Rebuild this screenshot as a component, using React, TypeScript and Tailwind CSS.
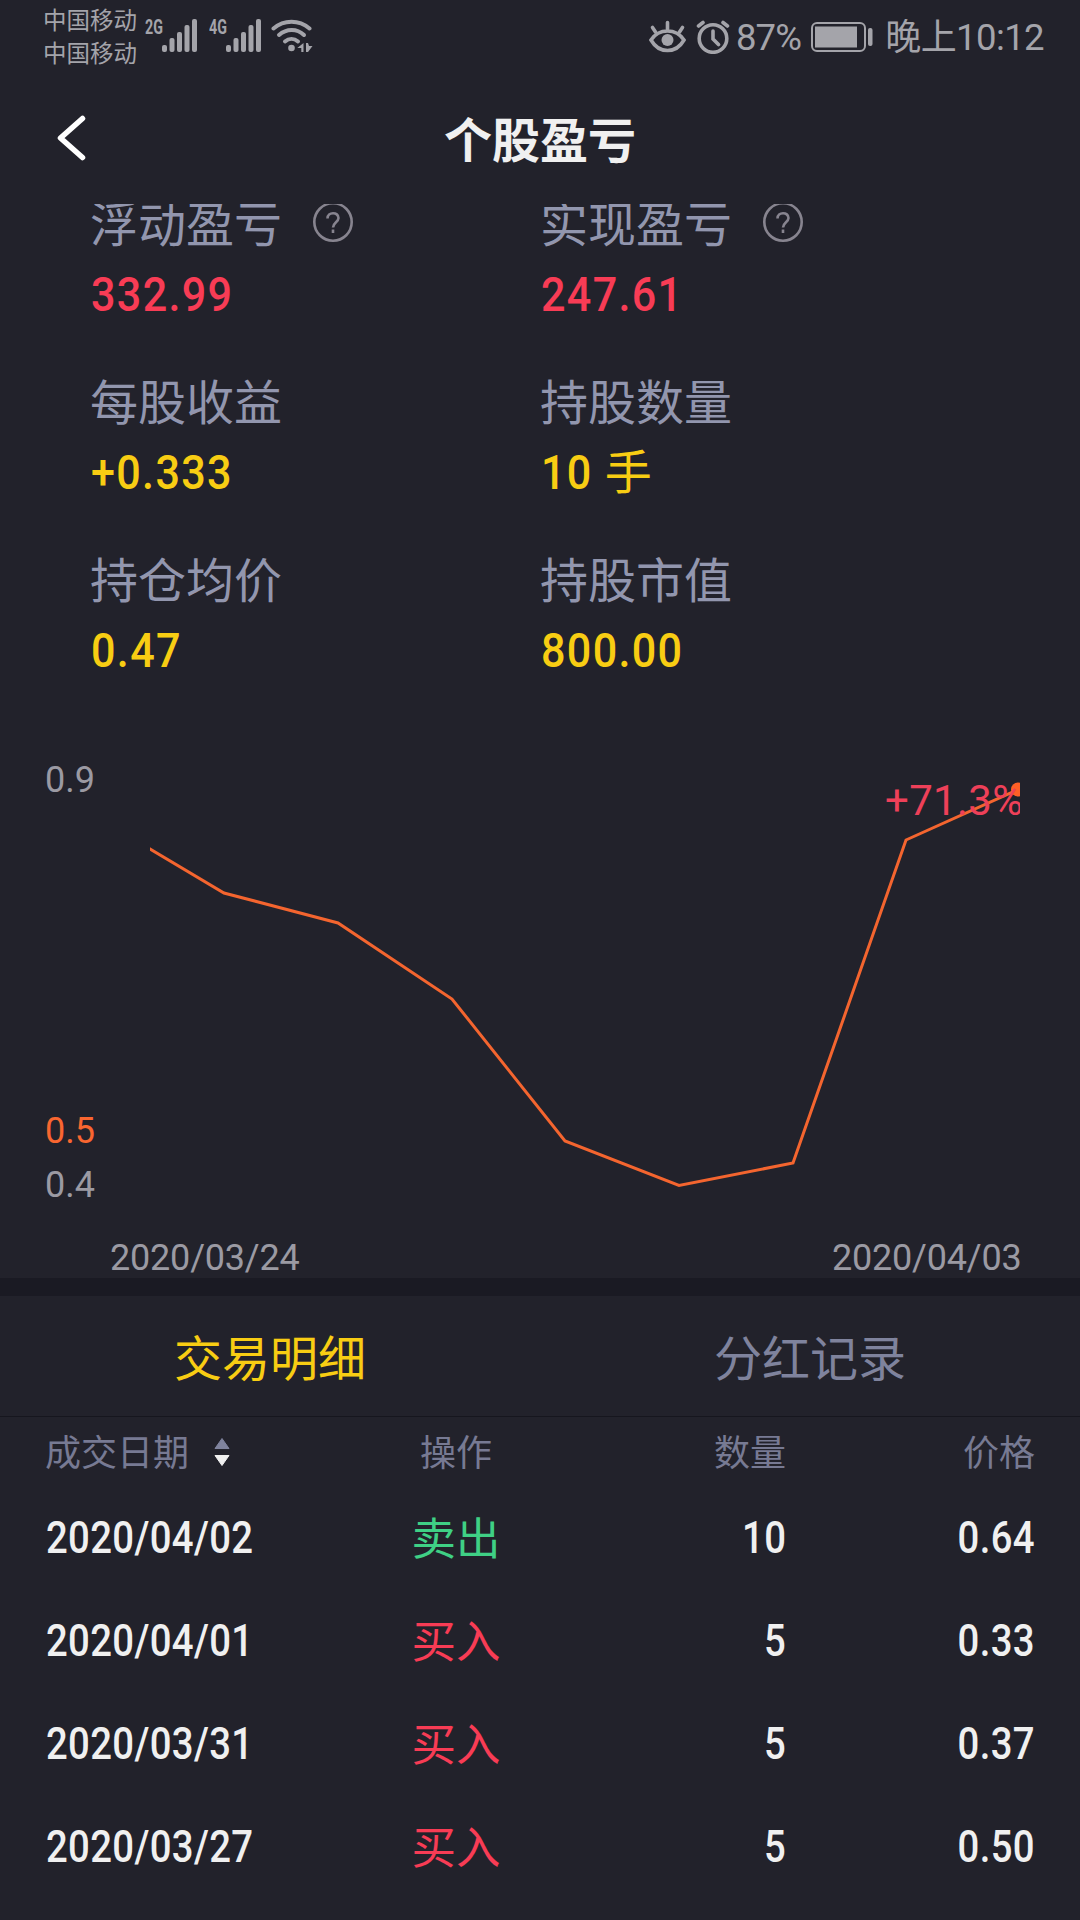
import { ReactNode } from "react";
import clsx from "clsx";

interface Stat {
  label: string;
  value: string;
  unit?: string;
  color: string;
  help?: boolean;
}

interface Trade {
  date: string;
  side: "buy" | "sell";
  amount: number;
  price: string;
}

const STATS: Stat[] = [
  { label: "浮动盈亏", value: "332.99", color: "text-[#f83c55]", help: true },
  { label: "实现盈亏", value: "247.61", color: "text-[#f83c55]", help: true },
  { label: "每股收益", value: "+0.333", color: "text-[#f8cd13]" },
  { label: "持股数量", value: "10", unit: "手", color: "text-[#f8cd13]" },
  { label: "持仓均价", value: "0.47", color: "text-[#f8cd13]" },
  { label: "持股市值", value: "800.00", color: "text-[#f8cd13]" },
];

const TRADES: Trade[] = [
  { date: "2020/04/02", side: "sell", amount: 10, price: "0.64" },
  { date: "2020/04/01", side: "buy", amount: 5, price: "0.33" },
  { date: "2020/03/31", side: "buy", amount: 5, price: "0.37" },
  { date: "2020/03/27", side: "buy", amount: 5, price: "0.50" },
];

// Narrow numerals, squeezed towards the side they are aligned to
function Num({ children, right }: { children: ReactNode; right?: boolean }) {
  return (
    <span
      className={clsx(
        "inline-block scale-x-[0.88] font-medium whitespace-nowrap",
        right ? "origin-right" : "ml-px origin-left"
      )}
    >
      {children}
    </span>
  );
}

function Signal({ label }: { label: string }) {
  return (
    <div className="flex items-start">
      <span className="w-[17px] text-[21px] leading-[16px] font-bold">
        <span className="inline-block origin-left scale-x-[0.68]">{label}</span>
      </span>
      <svg width="36" height="34" className="fill-current">
        <rect x="0" y="26" width="5" height="7" rx="2" />
        <rect x="7.5" y="19" width="5" height="14" rx="2" />
        <rect x="15" y="13" width="5" height="20" rx="2" />
        <rect x="22.5" y="6" width="5" height="27" rx="2" />
        <rect x="30" y="0" width="5" height="33" rx="2" />
      </svg>
    </div>
  );
}

function StatusBar() {
  return (
    <div className="flex h-[76px] justify-between pr-9 pl-[43px] text-[#a4a4aa]">
      <div className="flex">
        <div className="pt-[5px] text-[23.5px] leading-[33px]">
          <div>中国移动</div>
          <div>中国移动</div>
        </div>
        <div className="flex items-start gap-[11px] pt-[19px] pl-[8px]">
          <Signal label="2G" />
          <Signal label="4G" />
          <svg width="42" height="34" viewBox="0 0 42 34" fill="none" stroke="currentColor" strokeWidth="4" strokeLinecap="round" className="-ml-[2px]">
            <path d="M2.500 9.500C13 .5 28 .5 38.500 9.500" />
            <path d="M8 16C15.500 9.300 26 9.300 33 16" />
            <path d="M14 22.500C18 19 23 19 27 22.500" />
            <circle cx="20.500" cy="29" r="3.300" fill="currentColor" stroke="none" />
            <path d="M32.500 24v9h-2.200v-4h-4zM35 33v-9h2l1 3h3.500L37 33z" fill="currentColor" stroke="none" />
          </svg>
        </div>
      </div>
      <div className="flex h-[76px] items-center text-[36.500px]">
        <svg width="37" height="34" viewBox="0 0 37 34" fill="none" stroke="currentColor" strokeWidth="3.600" strokeLinecap="round" className="-mt-[2px]">
          <path d="M2 20C10 8 27 8 35 20C27 34 10 34 2 20Z" />
          <circle cx="18.500" cy="20" r="6" fill="currentColor" stroke="none" />
          <path d="M18.500 9V2.500M6.500 12L3.500 7.500M30.500 12L33.500 7.500" />
        </svg>
        <svg width="34" height="34" viewBox="0 0 34 34" fill="none" stroke="currentColor" strokeWidth="3.600" strokeLinecap="round" className="-mt-[2px] ml-[10px]">
          <circle cx="17" cy="18.500" r="13.800" />
          <path d="M17 11v8l5.500 5.500M2.500 6L7 2.500M31.500 6L27 2.500" />
        </svg>
        <span className="ml-[6px] tracking-[-0.8px]">87%</span>
        <svg width="63" height="30" viewBox="0 0 63 30" className="-mt-[2px] ml-[10px]">
          <rect x="1" y="1" width="53" height="28" rx="5" fill="none" stroke="currentColor" strokeWidth="2" />
          <rect x="4" y="4.500" width="42" height="21" fill="currentColor" />
          <rect x="57" y="6" width="4.500" height="18" rx="2" fill="currentColor" />
        </svg>
        <span className="ml-[11px] tracking-[-0.6px]">
          <span className="text-[36px]">晚上</span>10:12
        </span>
      </div>
    </div>
  );
}

function Header() {
  return (
    <div className="flex h-32 items-center px-[56px]">
      <svg width="30" height="48" viewBox="0 0 30 48" fill="none" stroke="#fff" strokeWidth="5.500" strokeLinecap="round" strokeLinejoin="round" className="-mt-1">
        <path d="M26.500 4.500L4.500 24l22 19.500" />
      </svg>
      <h1 className="flex-1 pt-[3px] pr-[30px] text-center text-[48px] leading-none font-bold text-[#f0f0f0]">个股盈亏</h1>
    </div>
  );
}

function StatCell({ stat }: { stat: Stat }) {
  return (
    <div className="h-[178px]">
      <div className="flex h-16 items-center text-[48px] leading-none text-[#9296ae]">
        {stat.label}
        {stat.help && (
          <svg width="42" height="42" viewBox="0 0 42 42" fill="none" stroke="#87848f" strokeWidth="2.600" className="-mt-[9px] ml-[30px]">
            <circle cx="21" cy="21" r="18.700" />
            <path d="M15.500 17.500C15.500 10.500 26.500 10.500 26.500 17C26.500 21 21 21.500 21 26.500M21 28.500V32" />
          </svg>
        )}
      </div>
      <div className={clsx("flex h-[72px] items-center text-[49px] leading-none tracking-[1.5px]", stat.color)}>
        <Num>{stat.value}</Num>
        {stat.unit && <span className="ml-[5px] text-[47px]">{stat.unit}</span>}
      </div>
    </div>
  );
}

function PriceChart() {
  return (
    <svg width="1080" height="550" viewBox="0 728 1080 550" className="block text-[36px]">
      <clipPath id="plot">
        <rect x="150" y="740" width="870" height="470" />
      </clipPath>
      <g fill="#9b9aa3">
        <text x="45" y="792">0.9</text>
        <text x="45" y="1197">0.4</text>
        <text x="110" y="1270" className="tracking-[-0.2px]">2020/03/24</text>
        <text x="1021.500" y="1270" textAnchor="end" className="tracking-[-0.2px]">2020/04/03</text>
      </g>
      <text x="45" y="1143" fill="#f96630">0.5</text>
      <g clipPath="url(#plot)">
        <polyline
          points="149,848.5 224,893 338,923 452,999 565,1141 679,1185.5 793,1163 906,840 1018,789.5"
          fill="none"
          stroke="#f4652f"
          strokeWidth="3"
        />
        <circle cx="1018" cy="789.500" r="7" fill="#ff6026" />
        <text x="885" y="815" fill="#ee4059" className="text-[42px] tracking-[0.3px]">+71.3%</text>
      </g>
    </svg>
  );
}

function Tabs() {
  return (
    <div className="grid h-[121px] grid-cols-2 items-center border-b border-[#16161e] pt-2 text-center text-[48px] leading-none">
      <div className="text-[#f8cd13]">交易明细</div>
      <div className="text-[#7f839d]">分红记录</div>
    </div>
  );
}

function TradeTable() {
  return (
    <div className="px-[45px]">
      <div className="grid h-[70px] grid-cols-[330px_162px_249px_249px] items-center pt-[4px] text-[36px] leading-none text-[#777a93]">
        <div className="flex items-center">
          成交日期
          <svg width="16" height="30" viewBox="0 0 16 30" className="-mt-[4px] ml-[25px]">
            <path d="M8 1.500L15 11.500H1Z" fill="#7f839d" stroke="#7f839d" strokeLinejoin="round" />
            <path d="M1 18.500H15L8 28.500Z" fill="#f0f0f0" stroke="#f0f0f0" strokeLinejoin="round" />
          </svg>
        </div>
        <div className="text-center">操作</div>
        <div className="text-right">数量</div>
        <div className="text-right">价格</div>
      </div>
      {TRADES.map((trade) => (
        <div
          key={trade.date}
          className="grid h-[103px] grid-cols-[330px_162px_249px_249px] items-center pt-px text-[43.500px] leading-none tracking-[0.4px] text-[#f0f0f0]"
        >
          <Num>{trade.date}</Num>
          <div
            className={clsx(
              "pt-[3px] text-center text-[44.500px] tracking-normal",
              trade.side === "sell" ? "text-[#3fd085]" : "text-[#f83c55]"
            )}
          >
            {trade.side === "sell" ? "卖出" : "买入"}
          </div>
          <div className="text-right"><Num right>{trade.amount}</Num></div>
          <div className="text-right"><Num right>{trade.price}</Num></div>
        </div>
      ))}
    </div>
  );
}

export default function App() {
  return (
    <div className="h-[1920px] w-[1080px] overflow-hidden bg-[#22222b] font-['Roboto','Noto_Sans_CJK_SC',sans-serif]">
      <StatusBar />
      <Header />
      {/* scrolled content, cut off under the header */}
      <div className="overflow-hidden">
        <div className="-mt-[10px] grid grid-cols-[450px_450px] pl-[90px]">
          {STATS.map((stat) => (
            <StatCell key={stat.label} stat={stat} />
          ))}
        </div>
        <PriceChart />
      </div>
      <div className="h-[18px] bg-[#1a1a23]" />
      <Tabs />
      <TradeTable />
    </div>
  );
}
